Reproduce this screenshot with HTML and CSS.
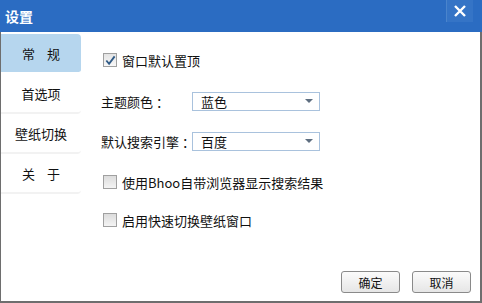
FILE: index.html
```html
<!DOCTYPE html>
<html>
<head>
<meta charset="utf-8">
<link rel="stylesheet" href="styles.css">
</head>
<body>
<div class="win">
  <div class="titlebar">
    <span class="title">设置</span>
    <span class="close"><svg width="14" height="12" viewBox="0 0 14 12"><path d="M2 1 L12 11 M12 1 L2 11" stroke="#fff" stroke-width="2.4" fill="none"/></svg></span>
  </div>
  <div class="body">
    <div class="side">
      <div class="tab active"><span class="spread">常规</span></div>
      <div class="tab">首选项</div>
      <div class="tab">壁纸切换</div>
      <div class="tab"><span class="spread">关于</span></div>
    </div>
    <div class="main">
      <div class="row chk first"><span class="box checked"><svg width="13" height="13" viewBox="0 0 13 13"><path d="M2.5 6.5 L5.5 10 L11.5 2" stroke="#2f5a86" stroke-width="2" fill="none"/></svg></span><span>窗口默认置顶</span></div>
      <div class="row sel r1"><span class="lbl">主题颜色<span class="colon">：</span></span><div class="select"><span>蓝色</span><i class="arrow"></i></div></div>
      <div class="row sel r2"><span class="lbl">默认搜索引擎<span class="colon">：</span></span><div class="select"><span>百度</span><i class="arrow"></i></div></div>
      <div class="row chk r3"><span class="box"></span><span>使用Bhoo自带浏览器显示搜索结果</span></div>
      <div class="row chk r4"><span class="box"></span><span>启用快速切换壁纸窗口</span></div>
      <div class="buttons"><button class="btn">确定</button><button class="btn">取消</button></div>
    </div>
  </div>
</div>
</body>
</html>
```
FILE: styles.css
```css
html, body { margin: 0; padding: 0; }
body { width: 482px; height: 303px; overflow: hidden; background: #fff; font-family: "Noto Sans CJK SC", "Noto Sans", sans-serif; font-size: 12px; color: #111; }
.win { width: 482px; height: 303px; box-sizing: border-box; border-left: 1px solid #6e6e6e; border-right: 2px solid #6e6e6e; border-bottom: 2px solid #6e6e6e; display: flex; flex-direction: column; }
.titlebar { height: 32px; background: #2b6cc2; display: flex; align-items: center; justify-content: space-between; padding: 0 9px 0 5px; margin-left: -1px; margin-right: -2px; }
.title { color: #fff; font-size: 14px; font-weight: bold; }
.close { width: 26px; height: 22px; margin-top: -10px; display: flex; align-items: center; justify-content: center; background: #3574c6; border-left: 1px solid #4a84cc; }
.body { flex: 1; display: flex; }
.side { width: 80px; padding-top: 2px; display: flex; flex-direction: column; }
.tab { height: 38px; display: flex; align-items: center; justify-content: center; font-size: 13px; border-bottom: 2px solid #f2f2f2; border-radius: 0 4px 4px 0; }
.tab.active { background: #b6d6ee; border-bottom-color: #fff; }
.spread { letter-spacing: 12px; margin-right: -12px; }
.main { flex: 1; padding-left: 20px; position: relative; }
.row { display: flex; align-items: center; font-size: 13px; height: 20px; }
.chk .box { width: 12px; height: 12px; border: 1px solid #a0a0a0; background: linear-gradient(#dcdcdc, #f4f4f4); margin-right: 5px; margin-left: 2px; display: flex; }
.chk .box.checked { background: linear-gradient(#e4e4e4, #f8f8f8); }
.chk .box svg { display: block; }
.first { margin-top: 18px; }
.r1 { margin-top: 21px; }
.r2 { margin-top: 20px; }
.r3 { margin-top: 21px; }
.r4 { margin-top: 18px; }
.lbl { width: 91px; flex-shrink: 0; white-space: nowrap; }
.colon { display: inline-block; padding-left: 3px; }
.select { flex-shrink: 0; height: 17px; border: 1px solid #a9c2dd; display: flex; align-items: center; justify-content: space-between; padding: 0 6px 0 8px; box-sizing: content-box; width: 112px; }
.arrow { width: 0; height: 0; border-left: 4px solid transparent; border-right: 4px solid transparent; border-top: 4px solid #5e6e80; }
.buttons { position: absolute; right: 9px; bottom: 8px; display: flex; gap: 12px; }
.btn { width: 59px; height: 22px; font-family: inherit; font-size: 12px; color: #111; border: 1px solid #8a8a8a; border-radius: 3px; background: linear-gradient(#fbfbfb, #e6e6e6); padding: 0; }
```
